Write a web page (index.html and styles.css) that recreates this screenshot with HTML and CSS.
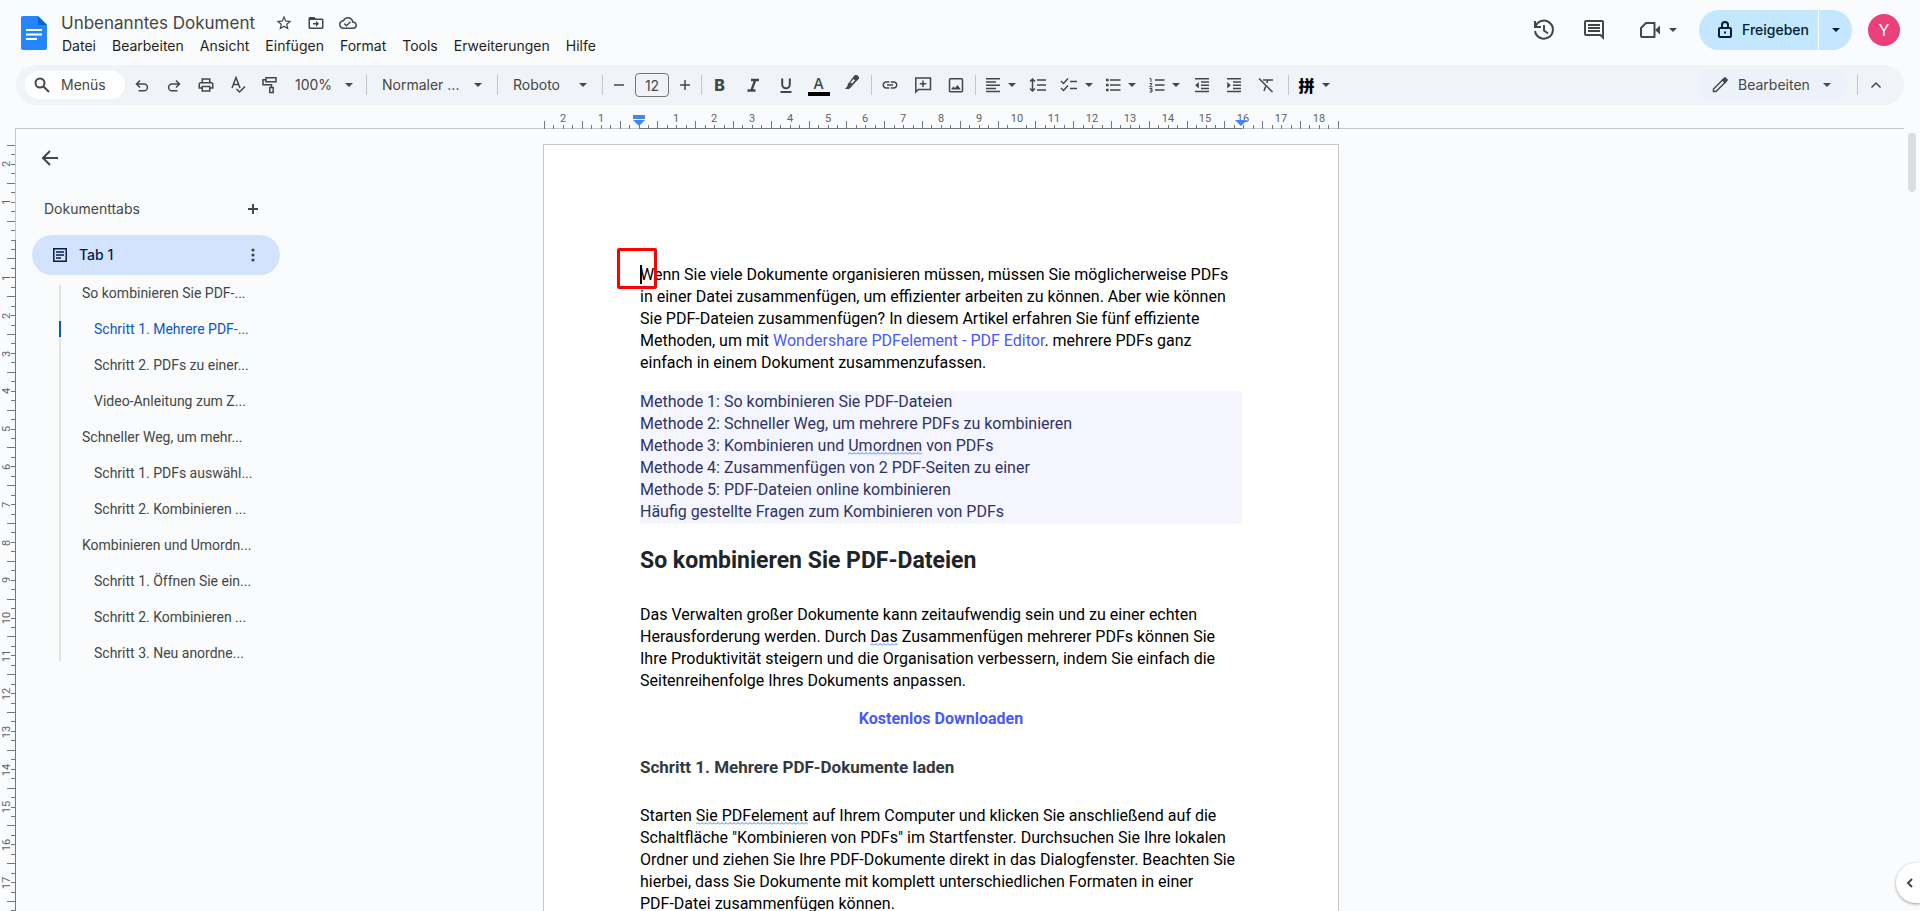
FILE: index.html
```html
<!DOCTYPE html>
<html lang="de">
<head>
<meta charset="utf-8">
<title>Unbenanntes Dokument</title>
<link rel="stylesheet" href="styles.css">
</head>
<body>
<svg class="sprite" aria-hidden="true">
  <symbol id="caret" viewBox="0 0 8 4"><path d="M0 0h8L4 4z"/></symbol>
  <symbol id="star" viewBox="0 0 24 24"><path d="M22 9.24l-7.19-.62L12 2 9.19 8.63 2 9.24l5.46 4.73L5.82 21 12 17.27 18.18 21l-1.63-7.03L22 9.24zM12 15.4l-3.76 2.27 1-4.28-3.32-2.88 4.38-.38L12 6.1l1.71 4.04 4.38.38-3.32 2.88 1 4.28L12 15.4z"/></symbol>
  <symbol id="move" viewBox="0 0 24 24"><path d="M20 6h-8l-2-2H4c-1.1 0-2 .9-2 2v12c0 1.1.9 2 2 2h16c1.1 0 2-.9 2-2V8c0-1.1-.9-2-2-2zm0 12H4V8h16v10zm-8-1l4-4-4-4v3H8v2h4v3z"/></symbol>
  <symbol id="cloud" viewBox="0 0 24 24"><path d="M19.35 10.04C18.67 6.59 15.64 4 12 4 9.11 4 6.6 5.64 5.35 8.04 2.34 8.36 0 10.91 0 14c0 3.31 2.69 6 6 6h13c2.76 0 5-2.24 5-5 0-2.64-2.05-4.78-4.65-4.96zM19 18H6c-2.21 0-4-1.79-4-4 0-2.05 1.53-3.76 3.56-3.97l1.07-.11.5-.95C8.08 7.14 9.94 6 12 6c2.62 0 4.88 1.86 5.39 4.43l.3 1.5 1.53.11c1.56.1 2.78 1.41 2.78 2.96 0 1.65-1.35 3-3 3zm-9-3.82l-2.09-2.09L6.5 13.5 10 17l6.01-6.01-1.41-1.41z"/></symbol>
</svg>

<header class="header">
  <svg class="logo" viewBox="0 0 26 34" aria-label="Docs"><path d="M2 0h15l9 9v23a2 2 0 0 1-2 2H2a2 2 0 0 1-2-2V2a2 2 0 0 1 2-2z" fill="#2684fc"/><path d="M17 0l9 9h-9z" fill="#0066da"/><path d="M5 14h16M5 18.500h16M5 23h11" stroke="#fff" stroke-width="2" fill="none"/></svg>
  <div class="heading">
    <div class="title-row">
      <input class="doc-title" type="text" value="Unbenanntes Dokument" aria-label="Dokumentname">
      <button class="plain" aria-label="Markieren"><svg class="i18"><use href="#star"/></svg></button>
      <button class="plain" aria-label="Verschieben"><svg class="i18"><use href="#move"/></svg></button>
      <button class="plain" aria-label="Dokumentstatus"><svg class="i18"><use href="#cloud"/></svg></button>
    </div>
    <nav class="menu">
      <button>Datei</button><button>Bearbeiten</button><button>Ansicht</button><button>Einfügen</button><button>Format</button><button>Tools</button><button>Erweiterungen</button><button>Hilfe</button>
    </nav>
  </div>
  <div class="actions">
    <button class="plain" aria-label="Versionsverlauf"><svg class="i24 line" viewBox="0 0 24 24"><path d="M3 3v6h6M3.300 9A9 9 0 1 1 3 13M12 7v5.500l4 3"/></svg></button>
    <button class="plain" aria-label="Kommentare"><svg class="i24" viewBox="0 0 24 24"><path d="M21.990 4c0-1.100-.890-2-1.990-2H4c-1.100 0-2 .9-2 2v12c0 1.100.9 2 2 2h14l4 4-.010-18zM20 4v13.170L18.830 16H4V4h16zM6 12h12v2H6zm0-3h12v2H6zm0-3h12v2H6z"/></svg></button>
    <button class="plain meet" aria-label="Videoanruf"><svg class="i24" viewBox="0 0 24 24"><path d="M8 5h8.500v14H4a1 1 0 0 1-1-1v-8z" fill="none" stroke="currentColor" stroke-width="2" stroke-linejoin="round"/><path d="M17 12l5-4.500v9z"/></svg><svg class="caret"><use href="#caret"/></svg></button>
    <div class="share">
      <button class="share-main"><svg class="i18 line" viewBox="0 0 18 18"><path d="M4 7h10a1 1 0 0 1 1 1v7a1 1 0 0 1-1 1H4a1 1 0 0 1-1-1V8a1 1 0 0 1 1-1zM6 7V4a3 3 0 0 1 6 0v3M8 11.500h2"/></svg>Freigeben</button>
      <button class="share-more" aria-label="Freigabeoptionen"><svg class="caret"><use href="#caret"/></svg></button>
    </div>
    <button class="avatar" aria-label="Konto">Y</button>
  </div>
</header>

<div class="toolbar" role="toolbar">
  <label class="search"><svg class="i18 line" viewBox="0 0 18 18"><path d="M11.500 7A4.500 4.500 0 1 1 2.500 7a4.500 4.500 0 0 1 9 0zM10.500 10.500l5.500 5.500"/></svg><input type="text" placeholder="Menüs" aria-label="Menüs"></label>
  <button class="tool" aria-label="Rückgängig"><svg class="i16 line thin" viewBox="0 0 16 16"><path d="M6 3.500L2.500 7 6 10.500M2.500 7H10a3.400 3.400 0 0 1 0 6.800H4.500"/></svg></button>
  <button class="tool" aria-label="Wiederholen"><svg class="i16 line thin" viewBox="0 0 16 16"><path d="M10 3.500L13.500 7 10 10.500M13.500 7H6a3.400 3.400 0 0 0 0 6.800h5.500"/></svg></button>
  <button class="tool" aria-label="Drucken"><svg class="i18" viewBox="0 0 24 24"><path d="M19 8h-1V3H6v5H5c-1.660 0-3 1.340-3 3v6h4v4h12v-4h4v-6c0-1.660-1.340-3-3-3zM8 5h8v3H8V5zm8 12v2H8v-4h8v2zm2-2v-2H6v2H4v-4c0-.55.45-1 1-1h14c.55 0 1 .45 1 1v4h-2z"/></svg></button>
  <button class="tool" aria-label="Rechtschreibung"><svg class="i18 line thin" viewBox="0 0 18 18"><path d="M3 12L7 1.500 11 12M4.500 8.500h5M7.500 13l3 3L16 10.500"/></svg></button>
  <button class="tool" aria-label="Format übertragen"><svg class="i18 line thin" viewBox="0 0 18 18"><path d="M5 1.800h10v4H5zM5 3.800H2v5h8.500v2.500M8.800 11.500h3.400v5H8.800z"/></svg></button>
  <span class="pick w80"><select aria-label="Zoom"><option>100%</option></select><svg class="caret"><use href="#caret"/></svg></span>
  <i class="sep"></i>
  <span class="pick w130"><select aria-label="Formatvorlage"><option>Normaler ...</option></select><svg class="caret"><use href="#caret"/></svg></span>
  <i class="sep"></i>
  <span class="pick w104"><select aria-label="Schriftart"><option>Roboto</option></select><svg class="caret"><use href="#caret"/></svg></span>
  <i class="sep"></i>
  <button class="tool" aria-label="Schrift verkleinern"><svg class="i16 line thin" viewBox="0 0 16 16"><path d="M3 8h10"/></svg></button>
  <input class="size" type="text" value="12" aria-label="Schriftgröße">
  <button class="tool" aria-label="Schrift vergrößern"><svg class="i16 line thin" viewBox="0 0 16 16"><path d="M3 8h10M8 3v10"/></svg></button>
  <i class="sep"></i>
  <div class="group">
    <button class="tool bold">B</button>
    <button class="tool" aria-label="Kursiv"><svg class="i16 line" viewBox="0 0 16 16"><path d="M6 3h8M2.500 13.500h8M10.300 3L6.300 13.500" stroke-width="2.300"/></svg></button>
    <button class="tool" aria-label="Unterstrichen"><svg class="i16 line" viewBox="0 0 16 16"><path d="M4.200 1.500v6a3.800 3.800 0 0 0 7.600 0v-6M2.500 15h11"/></svg></button>
    <button class="tool color">A</button>
    <button class="tool" aria-label="Markierungsfarbe"><svg class="i18 raised" viewBox="0 0 18 18"><path d="M5.500 10.500l5-7 1.500-1.500h2l2 2v1.500l-7 7.500-3.500-1z" /><path d="M7.500 9.500l3-3.500 1.500 1.500-3 3z" fill="#f0f4f9"/><path d="M5 10l4 3.500-2 1.500-1 1H2l2.500-3z"/></svg></button>
  </div>
  <i class="sep"></i>
  <div class="group">
    <button class="tool" aria-label="Link"><svg class="i18" viewBox="0 0 24 24"><path d="M4 12c0-1.700 1.300-3 3-3h4V7H7c-2.760 0-5 2.240-5 5s2.240 5 5 5h4v-2H7c-1.700 0-3-1.300-3-3zM8 13h8v-2H8v2zm9-6h-4v2h4c1.700 0 3 1.300 3 3s-1.300 3-3 3h-4v2h4c2.760 0 5-2.240 5-5s-2.240-5-5-5z"/></svg></button>
    <button class="tool" aria-label="Kommentar hinzufügen"><svg class="i18 line thin" viewBox="0 0 18 18"><path d="M1.800 16V2h14.700v11.500H4.300zM9 4.500v6.500M5.800 7.800h6.500"/></svg></button>
    <button class="tool" aria-label="Bild einfügen"><svg class="i18" viewBox="0 0 18 18"><path d="M3.500 2.800h11a1 1 0 0 1 1 1v11a1 1 0 0 1-1 1h-11a1 1 0 0 1-1-1v-11a1 1 0 0 1 1-1z" fill="none" stroke="currentColor" stroke-width="1.500"/><path d="M4.500 13.500v-1l2-2 1.500 1.500 2.500-3 3 4v.5z"/></svg></button>
  </div>
  <i class="sep after-insert"></i>
  <button class="tool combo" aria-label="Ausrichtung"><svg class="i16 line thin" viewBox="0 0 16 16"><path d="M1 1.800h14M1 5h10M1 8.200h14M1 11.400h10M1 14.600h14"/></svg><svg class="caret"><use href="#caret"/></svg></button>
  <button class="tool" aria-label="Zeilenabstand"><svg class="i18 line thin" viewBox="0 0 18 18"><path d="M8 4h9M8 9h9M8 14h9M3.500 4v10M1 5.500L3.500 3 6 5.500M1 12.500L3.500 15 6 12.500"/></svg></button>
  <button class="tool combo" aria-label="Checkliste"><svg class="i18 line thin" viewBox="0 0 18 18"><path d="M10 5.500h7M10 12.500h7M1 5l2.500 2.500 4.500-5M1 12l2.500 2.500 4.500-5"/></svg><svg class="caret"><use href="#caret"/></svg></button>
  <button class="tool combo" aria-label="Aufzählung"><svg class="i16 line thin" viewBox="0 0 16 16"><path d="M5 3h10.500M5 8h10.500M5 13h10.500"/><path d="M1 3h2.600M1 8h2.600M1 13h2.600" stroke-width="2.600"/></svg><svg class="caret"><use href="#caret"/></svg></button>
  <button class="tool combo" aria-label="Nummerierung"><svg class="i16 line thin" viewBox="0 0 16 16"><path d="M6 3h9.500M6 8h9.500M6 13h9.500"/><path d="M.5 1.500h1.500v3.500M.5 6.500h2.500L.8 9.800h2.700M.5 11.500h2.500v3.500H.5M1 13.200h2" stroke-width="1"/></svg><svg class="caret"><use href="#caret"/></svg></button>
  <button class="tool" aria-label="Einzug verkleinern"><svg class="i16 line thin" viewBox="0 0 16 16"><path d="M1 1.800h14M7 5h8M7 8.200h8M7 11.400h8M1 14.600h14"/><path d="M4.800 5v6.400L1.200 8.200z" fill="currentColor" stroke="none"/></svg></button>
  <button class="tool" aria-label="Einzug vergrößern"><svg class="i16 line thin" viewBox="0 0 16 16"><path d="M1 1.800h14M7 5h8M7 8.200h8M7 11.400h8M1 14.600h14"/><path d="M1.200 5v6.400l3.600-3.200z" fill="currentColor" stroke="none"/></svg></button>
  <button class="tool" aria-label="Formatierung löschen"><svg class="i18 line thin" viewBox="0 0 18 18"><path d="M6 4h10M10.800 4L9.800 7M8.600 10.500L7 15M2 2.500L15.500 16"/></svg></button>
  <i class="sep wide"></i>
  <button class="tool combo pinyin"><span>拼</span><svg class="caret"><use href="#caret"/></svg></button>
  <div class="mode">
    <svg class="i18 line thin" viewBox="0 0 18 18"><path d="M2.500 15.500V13L12 3.500 14.500 6 5 15.500z"/><path d="M11.500 4L14 1.800 16.200 4 14 6.500z" fill="currentColor"/></svg>
    <span class="pick"><select aria-label="Modus"><option>Bearbeiten</option></select><svg class="caret"><use href="#caret"/></svg></span>
  </div>
  <i class="sep far"></i>
  <button class="tool" aria-label="Menüs ausblenden"><svg class="i16 line thin" viewBox="0 0 16 16"><path d="M3.500 10.500L8 6l4.500 4.500"/></svg></button>
</div>

<div class="ruler-h">
  <svg viewBox="0 0 796 20" class="ruler-scale" aria-hidden="true">
    <g fill="none" stroke="#747775" shape-rendering="crispEdges">
      <path d="M1 17.500H796" stroke-width="4" stroke-dasharray="1 8.450"/>
      <path d="M1 15.500H796" stroke-width="8" stroke-dasharray="1 36.800"/>
      <path d="M96 19.500H699"/>
    </g>
    <g class="ruler-num" text-anchor="middle">
      <text x="20" y="13">2</text><text x="58" y="13">1</text><text x="133" y="13">1</text><text x="171" y="13">2</text><text x="209" y="13">3</text><text x="247" y="13">4</text><text x="285" y="13">5</text><text x="322" y="13">6</text><text x="360" y="13">7</text><text x="398" y="13">8</text><text x="436" y="13">9</text><text x="474" y="13">10</text><text x="511" y="13">11</text><text x="549" y="13">12</text><text x="587" y="13">13</text><text x="625" y="13">14</text><text x="662" y="13">15</text><text x="700" y="13">16</text><text x="738" y="13">17</text><text x="776" y="13">18</text>
    </g>
    <path d="M90 6h12v4H90zM90 11h12l-6 6zM692 11h12l-6 6z" fill="#4285f4"/>
  </svg>
</div>

<main class="workspace">
  <svg class="ruler-v" aria-hidden="true">
    <g fill="none" stroke="#747775" shape-rendering="crispEdges">
      <path d="M13 16V800" stroke-width="4" stroke-dasharray="1 8.450"/>
      <path d="M11 16V800" stroke-width="8" stroke-dasharray="1 36.800"/>
      <path d="M15.500 0V111" stroke="#c4c7c5"/>
      <path d="M15.500 111V2000"/>
    </g>
    <g class="ruler-num" text-anchor="middle">
      <text transform="translate(10 35) rotate(-90)">2</text><text transform="translate(10 73) rotate(-90)">1</text><text transform="translate(10 149) rotate(-90)">1</text><text transform="translate(10 187) rotate(-90)">2</text><text transform="translate(10 225) rotate(-90)">3</text><text transform="translate(10 262) rotate(-90)">4</text><text transform="translate(10 300) rotate(-90)">5</text><text transform="translate(10 338) rotate(-90)">6</text><text transform="translate(10 376) rotate(-90)">7</text><text transform="translate(10 414) rotate(-90)">8</text><text transform="translate(10 451) rotate(-90)">9</text><text transform="translate(10 489) rotate(-90)">10</text><text transform="translate(10 527) rotate(-90)">11</text><text transform="translate(10 565) rotate(-90)">12</text><text transform="translate(10 603) rotate(-90)">13</text><text transform="translate(10 641) rotate(-90)">14</text><text transform="translate(10 678) rotate(-90)">15</text><text transform="translate(10 716) rotate(-90)">16</text><text transform="translate(10 754) rotate(-90)">17</text>
    </g>
  </svg>
  <div class="canvas">
    <aside class="sidebar">
      <button class="plain back" aria-label="Zurück"><svg class="i18 line" viewBox="0 0 18 18"><path d="M17 9H2M9 2L2 9l7 7"/></svg></button>
      <div class="tabs-head"><h2>Dokumenttabs</h2><button class="plain" aria-label="Tab hinzufügen"><svg class="i16 line" viewBox="0 0 16 16"><path d="M3 8h10M8 3v10"/></svg></button></div>
      <div class="tab"><svg class="i16 line thin" viewBox="0 0 16 16"><path d="M1.800 1.800h12.400v12.400H1.800zM4 5h8M4 8h8M4 11h5"/></svg><a href="#tab1">Tab 1</a><button class="plain" aria-label="Taboptionen"><svg class="i16" viewBox="0 0 16 16"><circle cx="8" cy="3" r="1.600"/><circle cx="8" cy="8" r="1.600"/><circle cx="8" cy="13" r="1.600"/></svg></button></div>
      <ul class="outline">
        <li><a href="#s1">So kombinieren Sie PDF-...</a></li>
        <li class="sub active"><a href="#s2">Schritt 1. Mehrere PDF-...</a></li>
        <li class="sub"><a href="#s2">Schritt 2. PDFs zu einer...</a></li>
        <li class="sub"><a href="#s2">Video-Anleitung zum Z...</a></li>
        <li><a href="#s1">Schneller Weg, um mehr...</a></li>
        <li class="sub"><a href="#s2">Schritt 1. PDFs auswähl...</a></li>
        <li class="sub"><a href="#s2">Schritt 2. Kombinieren ...</a></li>
        <li><a href="#s1">Kombinieren und Umordn...</a></li>
        <li class="sub"><a href="#s2">Schritt 1. Öffnen Sie ein...</a></li>
        <li class="sub"><a href="#s2">Schritt 2. Kombinieren ...</a></li>
        <li class="sub"><a href="#s2">Schritt 3. Neu anordne...</a></li>
      </ul>
    </aside>
    <article class="page" id="tab1">
      <p class="intro"><span class="marker"></span><span class="cursor"></span>Wenn Sie viele Dokumente organisieren müssen, müssen Sie möglicherweise PDFs<br>in einer Datei zusammenfügen, um effizienter arbeiten zu können. Aber wie können<br>Sie PDF-Dateien zusammenfügen? In diesem Artikel erfahren Sie fünf effiziente<br>Methoden, um mit <a href="#tab1">Wondershare PDFelement - PDF Editor</a>. mehrere PDFs ganz<br>einfach in einem Dokument zusammenzufassen.</p>
      <p class="methods">Methode 1: So kombinieren Sie PDF-Dateien<br>Methode 2: Schneller Weg, um mehrere PDFs zu kombinieren<br>Methode 3: Kombinieren und <span class="hint">Umordnen</span> von PDFs<br>Methode 4: Zusammenfügen von 2 PDF-Seiten zu einer<br>Methode 5: PDF-Dateien online kombinieren<br>Häufig gestellte Fragen zum Kombinieren von PDFs</p>
      <h2 id="s1">So kombinieren Sie PDF-Dateien</h2>
      <p>Das Verwalten großer Dokumente kann zeitaufwendig sein und zu einer echten<br>Herausforderung werden. Durch <span class="hint">Das</span> Zusammenfügen mehrerer PDFs können Sie<br>Ihre Produktivität steigern und die Organisation verbessern, indem Sie einfach die<br>Seitenreihenfolge Ihres Dokuments anpassen.</p>
      <p class="download"><a href="#tab1">Kostenlos Downloaden</a></p>
      <h3 id="s2">Schritt 1. Mehrere PDF-Dokumente laden</h3>
      <p>Starten <span class="hint">Sie PDFelement</span> auf Ihrem Computer und klicken Sie anschließend auf die<br>Schaltfläche "Kombinieren von PDFs" im Startfenster. Durchsuchen Sie Ihre lokalen<br>Ordner und ziehen Sie Ihre PDF-Dokumente direkt in das Dialogfenster. Beachten Sie<br>hierbei, dass Sie Dokumente mit komplett unterschiedlichen Formaten in einer<br>PDF-Datei zusammenfügen können.</p>
    </article>
  </div>
  <div class="scrollbar"><div class="thumb"></div></div>
  <button class="side-toggle" aria-label="Seitenleiste einblenden"><svg class="i16 line" viewBox="0 0 16 16"><path d="M10 4L6 8l4 4"/></svg></button>
</main>
</body>
</html>
```

FILE: styles.css
```css
* { box-sizing: border-box; }

body {
  margin: 0;
  height: 100vh;
  overflow: hidden;
  display: flex;
  flex-direction: column;
  background: #f9fbfd;
  color: #444746;
  font: 14px/20px Inter, Roboto, sans-serif;
}

button, input, select {
  margin: 0;
  padding: 0;
  border: 0;
  background: none;
  color: inherit;
  font: inherit;
  outline: none;
}

a { color: inherit; text-decoration: none; }
svg { display: block; flex: none; fill: currentColor; }
.sprite { position: absolute; width: 0; height: 0; }
.i16 { width: 16px; height: 16px; }
.i18 { width: 18px; height: 18px; }
.i24 { width: 24px; height: 24px; }
.caret { width: 8px; height: 4px; }
.line { fill: none; stroke: currentColor; stroke-width: 2; }
.thin { stroke-width: 1.5; }
.plain { display: flex; align-items: center; justify-content: center; }

/* Header */
.header {
  flex: none;
  height: 65px;
  padding: 10px 20px 0 21px;
  display: flex;
  align-items: flex-start;
}
.logo { width: 26px; height: 34px; margin-top: 6px; }
.heading { margin-left: 14px; }
.title-row { display: flex; align-items: center; gap: 14px; height: 25px; }
.doc-title { width: 200px; font-size: 17px; line-height: 24px; }
.menu { display: flex; gap: 16px; padding-left: 1px; height: 22px; align-items: center; color: #1f1f1f; }
.actions { margin-left: auto; display: flex; align-items: center; height: 40px; }
.actions > .plain { width: 50px; }
.actions > .meet { width: 64px; padding-left: 12px; gap: 7px; }
.share { display: flex; gap: 1px; height: 40px; margin: 0 16px; color: #001d35; }
.share button { display: flex; align-items: center; background: #c2e7ff; }
.share-main { width: 119px; padding-left: 17px; gap: 8px; border-radius: 20px 0 0 20px; font-weight: 500; }
.share-more { width: 33px; justify-content: center; border-radius: 0 20px 20px 0; }
.avatar { width: 32px; height: 32px; border-radius: 50%; background: #ec407a; color: #fff; font-size: 16px; }

/* Toolbar */
.toolbar {
  flex: none;
  height: 40px;
  margin: 0 16px;
  padding: 0 12px 0 9px;
  display: flex;
  align-items: center;
  border-radius: 20px;
  background: #f0f4f9;
}
.search { display: flex; align-items: center; gap: 10px; width: 100px; height: 28px; padding-left: 8px; margin-right: 1px; border-radius: 14px; background: #fff; }
.search input { width: 56px; }
.search input::placeholder { color: #444746; opacity: 1; }
.tool { display: flex; align-items: center; justify-content: center; width: 32px; height: 30px; }
.pick { display: flex; align-items: center; position: relative; }
.pick select { width: 100%; height: 30px; appearance: none; }
.pick .caret { position: absolute; right: 13px; pointer-events: none; }
.w80 { width: 80px; padding-left: 9px; }
.w130 { width: 130px; padding-left: 15px; }
.w104 { width: 104px; padding-left: 15px; }
.w130 .caret, .w104 .caret { right: 15px; }
.sep { width: 1px; height: 20px; flex: none; background: #c7c7c7; }
.size { width: 34px; height: 24px; border: 1px solid #747775; border-radius: 4px; text-align: center; }
.group { display: flex; margin: 0 3px 0 1px; }
.group .tool { width: 33px; }
.bold { font-size: 16px; font-weight: 800; }
.color { flex-direction: column; font-size: 15px; font-weight: 500; line-height: 15px; padding-top: 2px; }
.color::after { content: ""; width: 22px; height: 4px; margin-top: 1px; background: #000; }
.raised { margin-bottom: 6px; }
.combo { width: 44px; gap: 7px; }
.after-insert { margin-right: 2px; }
.wide { margin: 0 3px 0 6px; }
.pinyin { font: 900 16px/20px "Noto Sans CJK SC", sans-serif; color: #000; }
.pinyin .caret { color: #444746; }
.mode { margin-left: auto; width: 150px; height: 30px; padding-left: 13px; display: flex; align-items: center; gap: 9px; border-radius: 15px; background: #edf2fa; }
.mode .pick { flex: 1; }
.mode .caret { right: 17px; }
.far { margin: 0 2px 0 9px; }

/* Rulers */
.ruler-h {
  flex: none;
  height: 24px;
  margin: 0 16px 0 15px;
  padding: 4px 37px 0 0;
  border-bottom: 1px solid #c4c7c5;
  display: flex;
  justify-content: center;
}
.ruler-scale { width: 796px; height: 20px; overflow: visible; }
.ruler-num { font-family: Roboto, sans-serif; font-size: 11px; fill: #5f6368; stroke: none; }
.ruler-v { width: 16px; height: 100%; }

/* Workspace */
.workspace { flex: 1; min-height: 0; display: flex; position: relative; }
.canvas {
  flex: 1;
  min-width: 0;
  padding-right: 38px;
  display: grid;
  grid-template-columns: minmax(0, 1fr) 796px minmax(0, 1fr);
  overflow: hidden;
}
.sidebar { width: 264px; padding: 17px 0 0 16px; }
.back { width: 36px; height: 24px; }
.tabs-head { display: flex; align-items: center; justify-content: space-between; height: 40px; margin: 19px 19px 6px 12px; }
.tabs-head h2 { margin: 0; font-size: 14px; font-weight: 400; }
.tab { display: flex; align-items: center; gap: 11px; height: 40px; padding: 0 19px 0 20px; border-radius: 20px; background: #d3e3fd; color: #041e49; font-weight: 500; }
.tab a { flex: 1; }
.tab button { color: #444746; }
.outline { position: relative; margin: 0; padding: 0 0 0 50px; list-style: none; white-space: nowrap; font-family: Roboto, sans-serif; }
.outline::before { content: ""; position: absolute; left: 27px; top: 10px; bottom: 10px; width: 2px; background: #e1e3e1; }
.outline li { height: 36px; line-height: 36px; }
.outline .sub { padding-left: 12px; }
.outline .active { position: relative; color: #0b57d0; }
.outline .active::before { content: ""; position: absolute; left: -23px; top: 10px; width: 2px; height: 16px; background: #0b57d0; }

/* Page */
.page {
  margin-top: 15px;
  height: 1123px;
  padding: 119px 96px 0;
  border: 1px solid #c4c7c5;
  background: #fff;
  color: #000;
  font: 16px/22px Roboto, sans-serif;
  white-space: nowrap;
}
.page p { margin: 0 0 16px; }
.page .intro { position: relative; margin-bottom: 17px; }
.page a { color: #4759ff; }
.marker { position: absolute; left: -23px; top: -16px; width: 40px; height: 41px; border: 3px solid #f00; border-radius: 2px; }
.cursor { position: absolute; left: 0; top: 1px; width: 2px; height: 19px; background: #000; }
.page .methods { margin: 0; padding-bottom: 1px; background: #f4f5ff; color: #2f3367; }
.hint { background: url("data:image/svg+xml,%3Csvg xmlns='http://www.w3.org/2000/svg' width='4' height='3'%3E%3Cpath d='M0 2.500L2 .5l2 2' fill='none' stroke='%234285f4'/%3E%3C/svg%3E") repeat-x left bottom; }
.page h2 { margin: 21px 0 27px; font-size: 23px; line-height: 32px; color: #212529; }
.page .download { margin: 0; text-align: center; font-weight: 700; }
.page h3 { margin: 25px 0 26px; font-size: 17px; line-height: 24px; color: #343a40; }

.scrollbar { width: 16px; padding: 4px 4px 0; }
.thumb { height: 59px; border-radius: 4px; background: #dadce0; }
.side-toggle {
  position: absolute;
  right: 0;
  bottom: 8px;
  width: 24px;
  height: 40px;
  padding-left: 6px;
  border-radius: 20px 0 0 20px;
  background: #fff;
  box-shadow: 0 1px 3px rgba(60, 64, 67, 0.5);
}
```
